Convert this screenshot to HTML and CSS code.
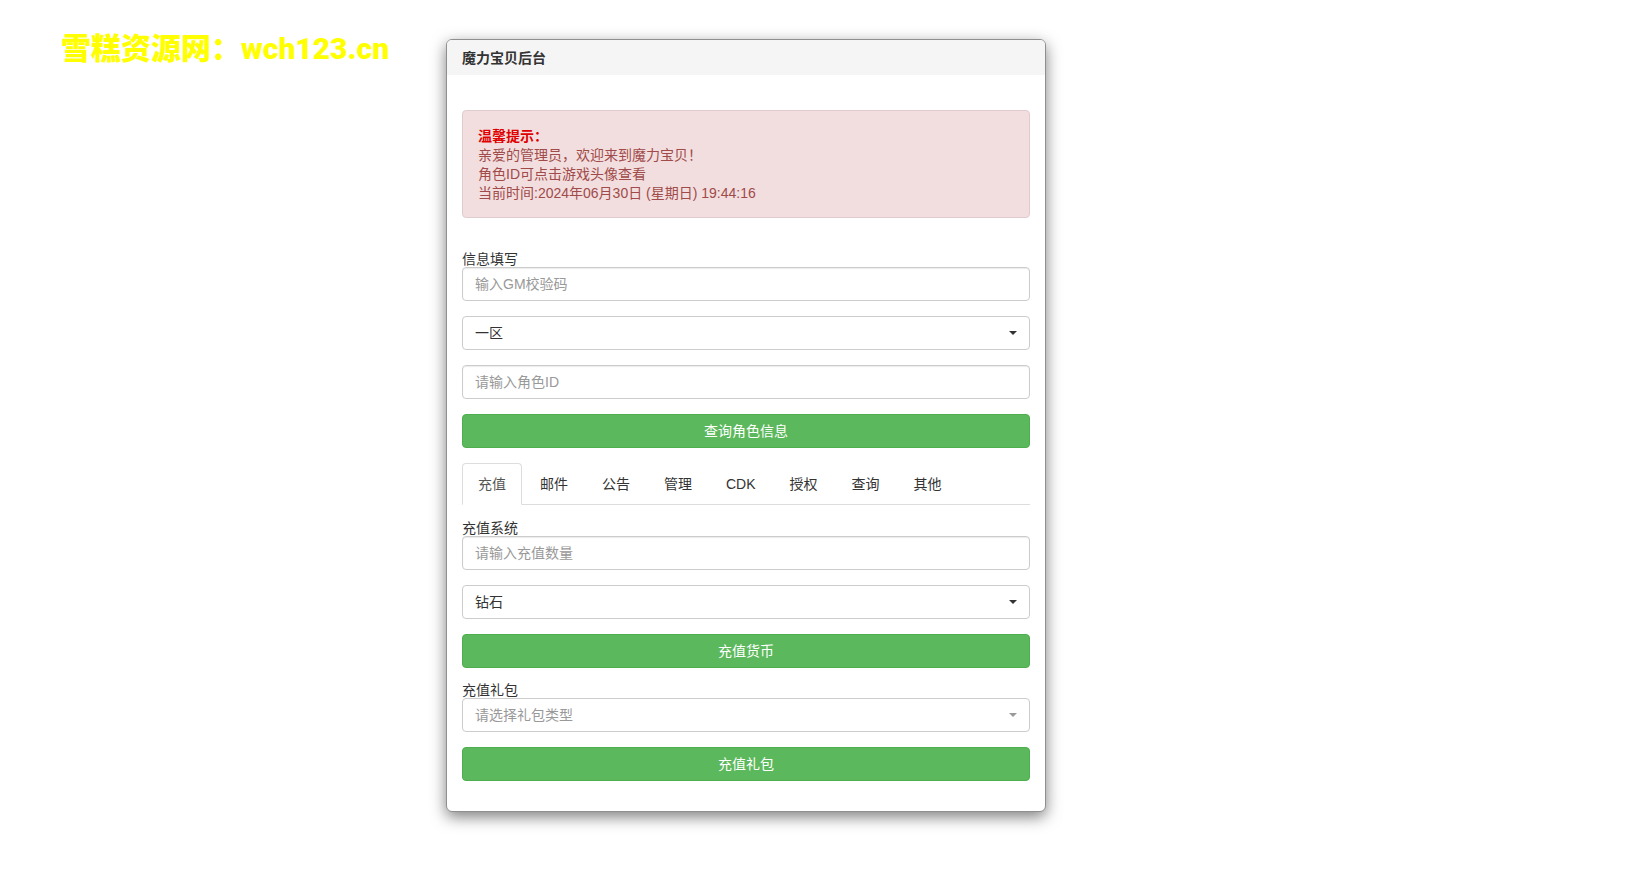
FILE: index.html
```html
<!DOCTYPE html>
<html lang="zh-CN">
<head>
<meta charset="utf-8">
<meta name="viewport" content="width=device-width, initial-scale=1">
<title>魔力宝贝后台</title>
<link rel="stylesheet" href="styles.css">
</head>
<body>
<div class="page">
  <p class="site-name">雪糕资源网：wch123.cn</p>
  <main class="panel">
    <header class="panel-header">
      <h1 class="panel-title">魔力宝贝后台</h1>
    </header>
    <div class="panel-body">
      <div class="alert" role="alert">
        <strong class="alert-title">温馨提示：</strong><br>
        亲爱的管理员，欢迎来到魔力宝贝！<br>
        角色ID可点击游戏头像查看<br>
        当前时间:2024年06月30日 (星期日) 19:44:16
      </div>

      <form class="form">
        <div class="field">
          <label for="code">信息填写</label>
          <input class="control" id="code" type="text" placeholder="输入GM校验码">
        </div>
        <div class="select-wrap">
          <select class="control" id="zone" aria-label="区服">
            <option>一区</option>
          </select>
        </div>
        <input class="control" id="role" type="text" placeholder="请输入角色ID" aria-label="角色ID">
        <button class="btn" type="button">查询角色信息</button>
      </form>

      <nav class="tabs">
        <a class="tab active" href="#pay">充值</a>
        <a class="tab" href="#mail">邮件</a>
        <a class="tab" href="#notice">公告</a>
        <a class="tab" href="#manage">管理</a>
        <a class="tab" href="#cdk">CDK</a>
        <a class="tab" href="#auth">授权</a>
        <a class="tab" href="#query">查询</a>
        <a class="tab" href="#other">其他</a>
      </nav>

      <form class="form" id="pay">
        <div class="field">
          <label for="amount">充值系统</label>
          <input class="control" id="amount" type="text" placeholder="请输入充值数量">
        </div>
        <div class="select-wrap">
          <select class="control" id="currency" aria-label="货币">
            <option>钻石</option>
          </select>
        </div>
        <button class="btn" type="button">充值货币</button>
        <div class="field">
          <label for="gift">充值礼包</label>
          <div class="select-wrap empty">
            <select class="control" id="gift">
              <option>请选择礼包类型</option>
            </select>
          </div>
        </div>
        <button class="btn" type="button">充值礼包</button>
      </form>
    </div>
  </main>
</div>
</body>
</html>
```

FILE: styles.css
```css
* {
  box-sizing: border-box;
}

body {
  margin: 0;
  background: #fff;
  color: #333;
  font: 14px/19px "Liberation Sans", "Noto Sans CJK SC", sans-serif;
}

.page {
  display: grid;
  grid-template-columns: minmax(0, 1fr) minmax(0, 600px) minmax(0, 1fr);
  align-items: start;
  padding: 39px 145px 39px 0;
}

.site-name {
  margin: 0;
  padding-left: 61px;
  color: #ff0;
  font: 900 30px/20px Roboto, "Noto Sans CJK SC", sans-serif;
  white-space: nowrap;
}

.panel {
  border: 1px solid #8f8f8f;
  border-radius: 6px;
  background: #fff;
  box-shadow: 0 5px 15px rgba(0, 0, 0, 0.5);
}

.panel-header {
  padding: 9px 15px 7px;
  border-radius: 5px 5px 0 0;
  background: #f5f5f5;
}

.panel-title {
  margin: 0;
  font-size: 14px;
  line-height: 19px;
  font-weight: 700;
}

.panel-body {
  padding: 35px 15px 30px;
}

.alert {
  margin-bottom: 34px;
  padding: 16px 15px 14px;
  border: 1px solid #e0ccd0;
  border-radius: 4px;
  background: #f2dede;
  color: #a04a4a;
}

.alert-title {
  color: #e00000;
}

.form {
  display: grid;
  gap: 15px;
}

.field {
  display: grid;
}

.field label {
  line-height: 15px;
}

.control {
  display: block;
  width: 100%;
  height: 34px;
  margin: 0;
  padding: 6px 12px;
  border: 1px solid #ccc;
  border-radius: 4px;
  background: #fff;
  color: #333;
  font: inherit;
  line-height: 20px;
  appearance: none;
}

input.control {
  box-shadow: inset 0 1px 1px rgba(0, 0, 0, 0.08);
}

.control::placeholder {
  color: #999;
  opacity: 1;
}

.select-wrap {
  position: relative;
  color: #333;
}

.select-wrap::after {
  content: "";
  position: absolute;
  top: 15px;
  right: 13px;
  border: 4px solid transparent;
  border-top-color: currentColor;
  border-bottom: 0;
  pointer-events: none;
}

.select-wrap.empty,
.empty .control {
  color: #999;
}

.btn {
  height: 34px;
  padding: 6px 12px;
  border: 1px solid #4cae4c;
  border-radius: 4px;
  background: #5cb85c;
  color: #fff;
  font: inherit;
  line-height: 20px;
  cursor: pointer;
}

.tabs {
  display: flex;
  gap: 2px;
  margin: 15px 0 16px;
  border-bottom: 1px solid #ddd;
}

.tab {
  margin-bottom: -1px;
  padding: 10px 15px;
  border: 1px solid transparent;
  border-radius: 4px 4px 0 0;
  color: #333;
  line-height: 20px;
  text-decoration: none;
}

.tab.active {
  border-color: #ddd #ddd #fff;
  background: #fff;
  color: #555;
}
```
